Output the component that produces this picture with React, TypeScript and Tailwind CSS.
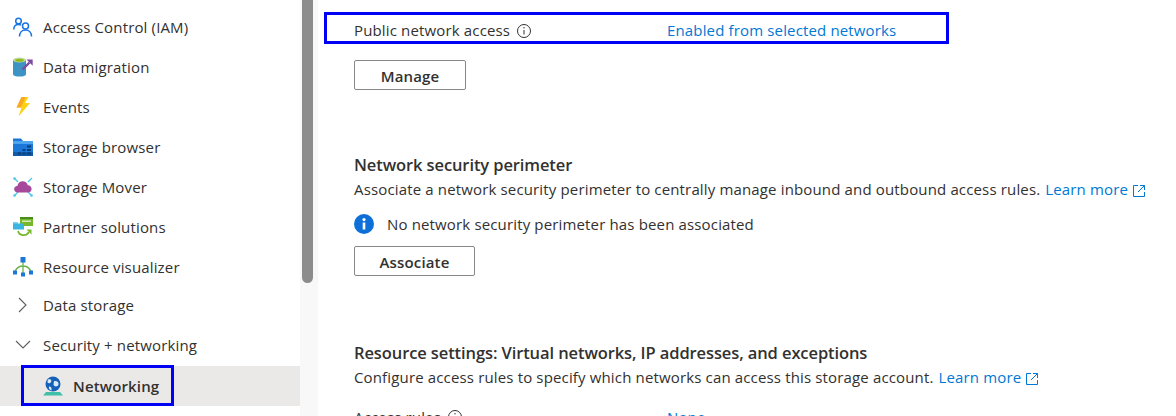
const font = "font-['Open_Sans',sans-serif]";

const IamIcon = () => (
  <svg width="20" height="20" viewBox="0 0 20 20" fill="none" stroke="#1b74e0" strokeWidth="1.5">
    <circle cx="5.5" cy="4" r="2.8" />
    <path d="M0.8 12.5c0-3 2-5 4.7-5 1 0 1.8.2 2.5.7" />
    <circle cx="12.5" cy="9" r="3" />
    <path d="M6.5 19.5c0-4 2.500-6.500 6-6.500s6 2.500 6 6.500" />
  </svg>
);

const MigrationIcon = () => (
  <svg width="20" height="20" viewBox="0 0 20 20">
    <path d="M0 3h13v14c0 1.800-3 2.600-6.500 2.600S0 18.800 0 17z" fill="#3d93c4" />
    <ellipse cx="6.500" cy="3" rx="6.500" ry="2.600" fill="#c4d9a0" />
    <ellipse cx="6.500" cy="3.200" rx="4.300" ry="1.500" fill="#8dbb1d" />
    <path d="M9.500 12.500l7-7" stroke="#7e4a9e" strokeWidth="2.400" />
    <path d="M13.500 2.500h6.200v6.200z" fill="#7e4a9e" />
  </svg>
);

const BoltIcon = () => (
  <svg width="20" height="20" viewBox="0 0 20 20">
    <path d="M8.500 0h7l-3.500 6h5L5.500 19.500 8.500 10.500h-5z" fill="#fcd116" />
    <path d="M8.500 0h4L8 10.500h-4.500z" fill="#f9a825" />
  </svg>
);

const BrowserIcon = () => (
  <svg width="20" height="20" viewBox="0 0 20 20">
    <path d="M0 1.500h8l2 2.500h10v15H0z" fill="#1b78d8" />
    <path d="M0 4h20v3H0z" fill="#4ea5ef" />
    <path d="M0 15h20v4H0z" fill="#125ba8" />
    <path d="M5 15.500h3v2H5zM9.500 15.500h3v2h-3zM14 15.500h4v2h-4zM9.500 12h3v2h-3zM14 12h4v2h-4zM14 8.500h4v2h-4z" fill="#0d3f78" />
  </svg>
);

const MoverIcon = () => (
  <svg width="20" height="20" viewBox="0 0 20 20">
    <path d="M1 1l4 4M19 1l-4 4M1 19l4-4M19 19l-4-4" stroke="#50c7e8" strokeWidth="1.400" />
    <circle cx="1.500" cy="1.500" r="1.300" fill="#50c7e8" />
    <circle cx="1.500" cy="18.500" r="1.300" fill="#50c7e8" />
    <circle cx="18.500" cy="18.500" r="1.300" fill="#50c7e8" />
    <path d="M5 15.500c-5 0-5-6.500-.5-6.800C5.500 3 13.500 3 14.800 8.200c5 .2 5.200 7.300 0 7.300z" fill="#a6489b" />
  </svg>
);

const PartnerIcon = () => (
  <svg width="20" height="20" viewBox="0 0 20 20">
    <path d="M7 0h13v9H7z" fill="#76b82a" />
    <path d="M7 0h13v2H7z" fill="#4a8c1d" />
    <path d="M9 3.500h9v1.500H9z" fill="#d6ecb8" />
    <path d="M0 5h4l1 1.500h6v6H0z" fill="#3cb4e0" />
    <path d="M0 5h4l1 1.500H0z" fill="#7ad3f2" />
    <path d="M5 14c1 4.500 8 6 11 1" fill="none" stroke="#76b82a" strokeWidth="1.700" />
    <path d="M13.500 12.500h5v5z" fill="#76b82a" />
  </svg>
);

const VisualizerIcon = () => (
  <svg width="20" height="20" viewBox="0 0 20 20">
    <path d="M10 5v12M2 14c2-3.500 5-5 8-5s6 1.500 8 5" fill="none" stroke="#69b34c" strokeWidth="1.300" />
    <path d="M7.500 0h5v5.500h-5zM0 13.500h4v4H0zM16 13.500h4v4h-4zM8 15.500h4v4H8z" fill="#1b78d8" />
  </svg>
);

const GlobeIcon = () => (
  <svg width="20" height="20" viewBox="0 0 20 20">
    <path d="M3 16h14l3 3.500H0z" fill="#3fbfa8" />
    <circle cx="10" cy="8" r="7.500" fill="#1760b8" />
    <path d="M5 3.500c3-1 4 .5 3 2.500S4 7.500 4.500 5zM11 5c3-.5 5 1 4.500 3.500S11 11 10.500 8.500zM6 10.500c2 0 3 1.500 2.500 4-2-.5-3-2-2.500-4z" fill="#d7ebfb" />
  </svg>
);

const InfoOutline = () => (
  <svg width="16" height="16" viewBox="0 0 16 16" fill="none" stroke="#323130">
    <circle cx="8" cy="8" r="6.500" />
    <path d="M8 7v4.500" />
    <circle cx="8" cy="4.800" r=".7" fill="#323130" stroke="none" />
  </svg>
);

const InfoSolid = () => (
  <svg width="20" height="20" viewBox="0 0 20 20">
    <circle cx="10" cy="10" r="10" fill="#0f6fd8" />
    <path d="M8.700 8.500h2.600v7H8.700z" fill="#fff" />
    <circle cx="10" cy="5.600" r="1.600" fill="#fff" />
  </svg>
);

const ExternalIcon = () => (
  <svg width="12" height="12" viewBox="0 0 12 12" fill="none" stroke="#0078d4" className="ml-[5px] inline-block">
    <path d="M5 .5H.5v11h11V7M7 .5h4.500V5M11.500 .5 5 7" />
  </svg>
);

const Chevron = ({ open }: { open: boolean }) => (
  <svg width="16" height="16" viewBox="0 0 16 16" fill="none" stroke="#605e5c" strokeWidth="1.100">
    <path d={open ? "M1 4l7 7 7-7" : "M4 1l7 7-7 7"} />
  </svg>
);

const navItems = [
  { label: "Access Control (IAM)", icon: <IamIcon /> },
  { label: "Data migration", icon: <MigrationIcon /> },
  { label: "Events", icon: <BoltIcon /> },
  { label: "Storage browser", icon: <BrowserIcon /> },
  { label: "Storage Mover", icon: <MoverIcon /> },
  { label: "Partner solutions", icon: <PartnerIcon /> },
  { label: "Resource visualizer", icon: <VisualizerIcon /> },
];

const LearnMore = () => (
  <a className="ml-[5px] text-[#0078d4] whitespace-nowrap">
    Learn more
    <ExternalIcon />
  </a>
);

const App = () => {
  return (
    <div className={`${font} flex h-[416px] w-[1176px] overflow-hidden bg-white text-[15px] tracking-[0.15px] text-[#323130]`}>
      <div className="w-[300px] shrink-0 pt-[7px]">
        {navItems.map((item) => (
          <div key={item.label} className="flex h-10 items-center gap-[10px] pl-[13px]">
            {item.icon}
            <span>{item.label}</span>
          </div>
        ))}
        <div className="flex h-[36px] items-center gap-[10px] pl-[13px]">
          <span className="flex w-5 justify-center">
            <Chevron open={false} />
          </span>
          <span>Data storage</span>
        </div>
        <div className="mt-[2px] flex h-10 items-center gap-[10px] pl-[13px]">
          <span className="flex w-5 justify-center">
            <Chevron open={true} />
          </span>
          <span>Security + networking</span>
        </div>
        <div className="mt-[1px] flex h-10 bg-[#ebe9e8] pl-[21px]">
          <div className="-mt-[1px] flex h-[41px] w-[153px] items-center gap-[10px] border-[3px] border-[#0000f5] pl-[19px] pt-[1px] font-semibold">
            <GlobeIcon />
            <span>Networking</span>
          </div>
        </div>
      </div>

      <div className="flex w-[18px] shrink-0 justify-center bg-[#f8f8f8] pr-[3px]">
        <div className="h-[283px] w-[11px] rounded-b-md bg-[#8c8c8c]" />
      </div>

      <div className="min-w-0 flex-1 pl-[6px] pt-[12px]">
        <div className="flex h-[32px] w-[625px] items-center border-[3px] border-[#0000f5] pl-[27px] pt-[5px]">
          <span className="flex w-[313px] items-center gap-[6px]">
            Public network access
            <InfoOutline />
          </span>
          <span className="text-[#0078d4]">Enabled from selected networks</span>
        </div>

        <div className="ml-[30px]">
          <button className="mt-[16px] h-[30px] w-[112px] rounded-[2px] border border-[#8a8886] pt-[2px] font-semibold">
            Manage
          </button>

          <h2 className="mt-[63px] text-[16.500px] leading-[24px] font-semibold tracking-[-0.1px]">Network security perimeter</h2>
          <p className="leading-[24px] whitespace-nowrap">
            Associate a network security perimeter to centrally manage inbound and outbound access rules.
            <LearnMore />
          </p>
          <div className="mt-[11px] flex h-6 items-center gap-[13px]">
            <InfoSolid />
            <span>No network security perimeter has been associated</span>
          </div>
          <button className="mt-[10px] h-[30px] w-[121px] rounded-[2px] border border-[#8a8886] pt-[2px] font-semibold">
            Associate
          </button>

          <h2 className="mt-[65px] text-[16.500px] leading-[24px] font-semibold tracking-[-0.1px]">
            Resource settings: Virtual networks, IP addresses, and exceptions
          </h2>
          <p className="leading-[24px] whitespace-nowrap">
            Configure access rules to specify which networks can access this storage account.
            <LearnMore />
          </p>
          <div className="mt-[16px] flex h-6 items-center">
            <span className="flex w-[313px] items-center gap-[6px]">
              Access rules
              <InfoOutline />
            </span>
            <span className="text-[#0078d4]">None</span>
          </div>
        </div>
      </div>
    </div>
  );
};

export default App;
